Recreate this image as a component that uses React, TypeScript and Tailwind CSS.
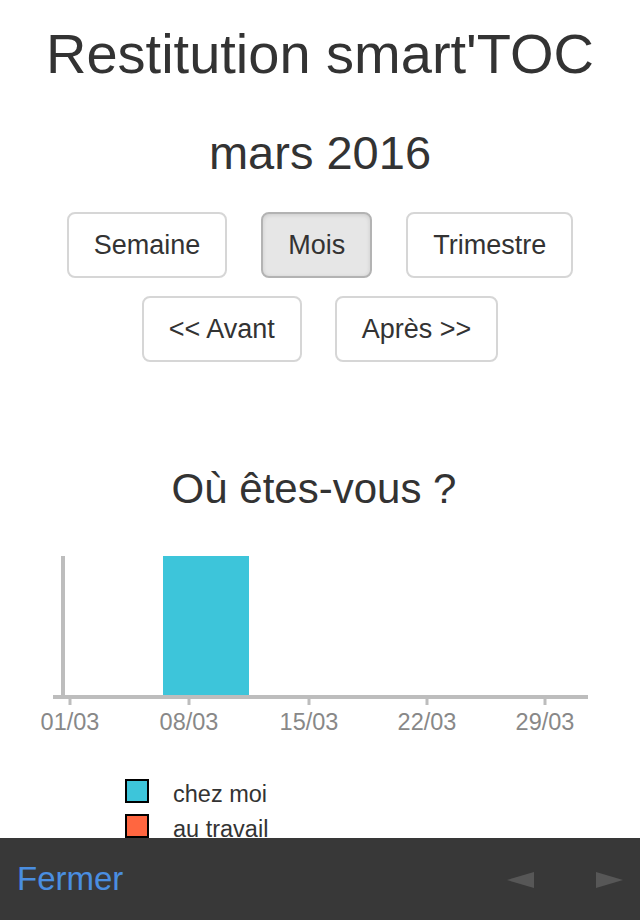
import React from 'react';

const ticks = [
  { x: 70, label: '01/03' },
  { x: 189, label: '08/03' },
  { x: 309, label: '15/03' },
  { x: 427, label: '22/03' },
  { x: 545, label: '29/03' },
];

const PeriodButton = ({ label, active }: { label: string; active?: boolean }) => (
  <button
    className={
      active
        ? 'h-[66px] px-[25px] rounded-[8px] border-2 border-[#b3b3b3] bg-[#e6e6e6] text-[27px] text-[#333] shadow-[inset_0_1px_4px_rgba(0,0,0,0.12)]'
        : 'h-[66px] px-[25px] rounded-[8px] border-2 border-[#d6d6d6] bg-white text-[27px] text-[#333]'
    }
  >
    {label}
  </button>
);

const Chart = () => (
  <svg width="640" height="231" viewBox="0 0 640 231" className="block">
    {/* bar for chez moi */}
    <rect x="163" y="46" width="86" height="141" fill="#3dc5da" />
    {/* axes */}
    <line x1="63" y1="46" x2="63" y2="189" stroke="#bdbdbd" strokeWidth="4" />
    <line x1="53" y1="187" x2="588" y2="187" stroke="#bdbdbd" strokeWidth="4" />
    {ticks.map((t) => (
      <g key={t.label}>
        <line x1={t.x} y1="187" x2={t.x} y2="195" stroke="#bdbdbd" strokeWidth="3" />
        <text
          x={t.x}
          y="220"
          textAnchor="middle"
          fontSize="23.5"
          fill="#888"
          fontFamily="'Liberation Sans', Arial, sans-serif"
        >
          {t.label}
        </text>
      </g>
    ))}
  </svg>
);

const LegendItem = ({ color, label }: { color: string; label: string }) => (
  <div className="flex items-end gap-[24px]">
    <span className={`w-[24px] h-[24px] border-2 border-black ${color}`} />
    <span className="text-[23.5px] leading-[18px] text-[#333]">{label}</span>
  </div>
);

export default function App() {
  return (
    <div className="min-h-screen bg-white text-[#333] font-['Liberation_Sans',Arial,sans-serif] pb-[100px]">
      <h1 className="pt-[26px] text-[56px] leading-none text-center">Restitution smart'TOC</h1>
      <h2 className="mt-[47px] text-[47px] leading-none text-center">mars 2016</h2>

      <div className="mt-[36px] flex flex-col items-center gap-[18px]">
        <div className="flex gap-[34px]">
          <PeriodButton label="Semaine" />
          <PeriodButton label="Mois" active />
          <PeriodButton label="Trimestre" />
        </div>
        <div className="flex gap-[33px]">
          <PeriodButton label="<< Avant" />
          <PeriodButton label="Après >>" />
        </div>
      </div>

      <h3 className="mt-[106px] pr-[12px] text-[42px] leading-none text-center">Où êtes-vous ?</h3>
      <Chart />

      <div className="mt-[38px] pl-[125px] flex flex-col gap-[11px]">
        <LegendItem color="bg-[#3dc5da]" label="chez moi" />
        <LegendItem color="bg-[#ff6640]" label="au travail" />
      </div>

      {/* bottom toolbar */}
      <div className="fixed bottom-0 inset-x-0 h-[82px] bg-[#383838] flex items-center justify-between pl-[17px] pr-[17px]">
        <span className="text-[33px] text-[#4a8ee0]">Fermer</span>
        <div className="flex items-center gap-[62px] pt-[2px]">
          <svg width="27" height="16" viewBox="0 0 27 16">
            <polygon points="0,8 27,0 27,16" fill="#575757" />
          </svg>
          <svg width="27" height="16" viewBox="0 0 27 16">
            <polygon points="27,8 0,0 0,16" fill="#575757" />
          </svg>
        </div>
      </div>
    </div>
  );
}
